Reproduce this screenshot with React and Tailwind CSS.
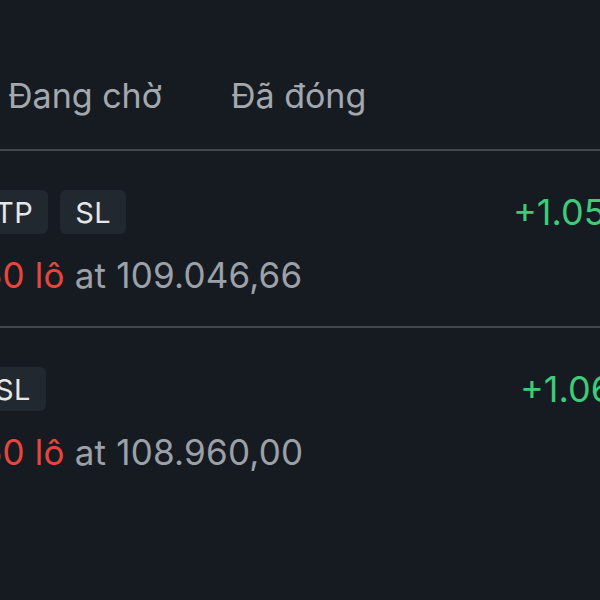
export default function App() {
  const font = { fontFamily: "Inter, 'Noto Sans', sans-serif" };
  const Row = ({ badges, badgeStart, amount, amountLeft, price }) => (
    <div className="flex flex-col pt-[39px]">
      <div className="flex items-center h-[44px]" style={{ marginLeft: badgeStart }}>
        <div className="flex items-center gap-[12px] shrink-0" style={{ width: amountLeft - badgeStart }}>
          {badges.map((b) => (
            <div key={b} className="h-[44px] px-[15px] rounded-[6px] bg-[#22282f] text-[#e4e6e9] text-[29px] tracking-[0.5px] flex items-center leading-none">
              {b}
            </div>
          ))}
        </div>
        <div className="shrink-0 text-[#3dcc78] text-[36px] leading-none whitespace-nowrap">{amount}</div>
      </div>
      <div className="mt-[20px] text-[35px] tracking-[0.2px] leading-[42px] whitespace-nowrap ml-[-19px]">
        <span className="text-[#e8463d]">50 lô</span>
        <span className="text-[#9ca1a8]"> at {price}</span>
      </div>
    </div>
  );
  return (
    <div className="w-[600px] h-[600px] overflow-hidden bg-[#161b22]" style={font}>
      <div className="flex gap-[69px] pl-[8px] pt-[76px] h-[149px] text-[34px] text-[#a3a8ae] whitespace-nowrap leading-[40px]">
        <span>Đang chờ</span>
        <span>Đã đóng</span>
      </div>
      <div className="h-[2px] bg-[#41464d]" />
      <div className="h-[175px] overflow-hidden">
        <Row badges={["TP", "SL"]} badgeStart={-20} amount="+1.055,20" amountLeft={513} price="109.046,66" />
      </div>
      <div className="h-[2px] bg-[#41464d]" />
      <div className="h-[270px] overflow-hidden">
        <Row badges={["SL"]} badgeStart={-20} amount="+1.060,00" amountLeft={520} price="108.960,00" />
      </div>
    </div>
  );
}
